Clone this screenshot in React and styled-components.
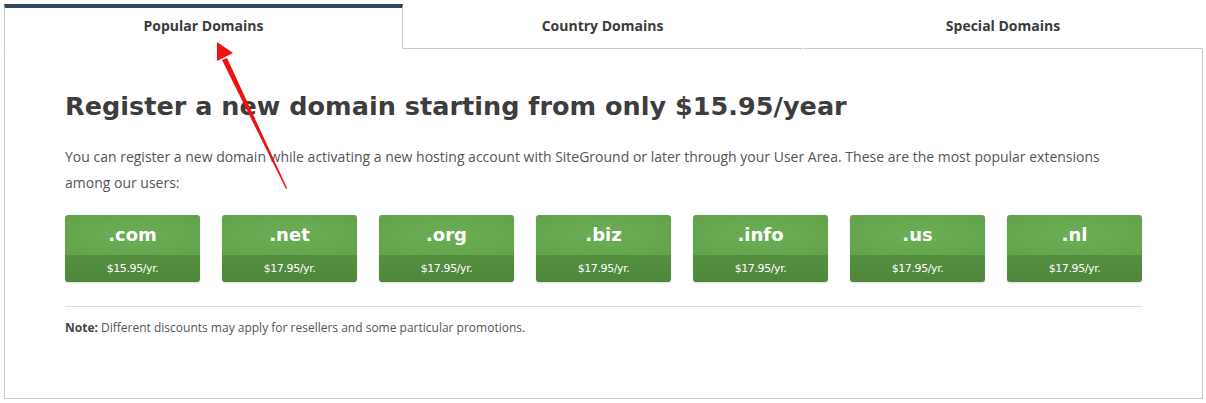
import styled, { createGlobalStyle } from "styled-components";

const GlobalStyle = createGlobalStyle`
  html, body {
    margin: 0;
    padding: 0;
    background: #ffffff;
  }
  body {
    font-family: "Open Sans", "Liberation Sans", sans-serif;
    color: #555555;
  }
`;

const Page = styled.div`
  position: relative;
  width: 1206px;
  height: 403px;
  padding: 4px 3px 0 4px;
  box-sizing: border-box;
`;

const Tabs = styled.div`
  display: grid;
  grid-template-columns: 398px 401px 400px;
  height: 45px;
`;

const Tab = styled.div`
  display: flex;
  align-items: center;
  justify-content: center;
  padding-bottom: 6px;
  font-family: "Open Sans", sans-serif;
  font-weight: 700;
  font-size: 14px;
  color: #3b3b3b;
  box-sizing: border-box;
  border-top: 4px solid ${p => (p.$active ? "#34495e" : "transparent")};
  border-left: 1px solid ${p => (p.$active ? "#c9c9c9" : "transparent")};
  border-right: 1px solid ${p => (p.$active ? "#c9c9c9" : "transparent")};
  border-bottom: 1px solid ${p => (p.$active ? "transparent" : "#c9c9c9")};
  margin-right: ${p => (p.$active ? "-1px" : "0")};
`;

const Panel = styled.div`
  border: 1px solid #c9c9c9;
  border-top: none;
  height: 350px;
  box-sizing: border-box;
  padding: 39px 60px 0 60px;
`;

const Heading = styled.h1`
  margin: 0;
  font-family: "DejaVu Sans", sans-serif;
  font-weight: 700;
  font-size: 25.5px;
  letter-spacing: 0.02px;
  color: #3d3d3d;
  line-height: 36px;
`;

const Intro = styled.p`
  margin: 20px 0 0;
  font-size: 14px;
  line-height: 26px;
  color: #555555;
  width: 1060px;
`;

const CardRow = styled.div`
  display: grid;
  grid-template-columns: repeat(7, 135px);
  gap: 22px;
  margin-top: 19px;
`;

const Card = styled.div`
  display: flex;
  flex-direction: column;
  height: 67px;
  border-radius: 3px;
  overflow: hidden;
  color: #ffffff;
  box-shadow: 0 1px 2px rgba(0, 0, 0, 0.15);
`;

const CardName = styled.div`
  height: 40px;
  display: flex;
  align-items: center;
  justify-content: center;
  background: radial-gradient(ellipse at center, #6cae55 0%, #62a24a 100%);
  font-family: "DejaVu Sans", sans-serif;
  font-weight: 700;
  font-size: 18px;
  padding-bottom: 2px;
  box-sizing: border-box;
`;

const CardPrice = styled.div`
  flex: 1;
  display: flex;
  align-items: center;
  justify-content: center;
  background: linear-gradient(#558f40, #4e873a);
  font-family: "DejaVu Sans", sans-serif;
  font-size: 11px;
  letter-spacing: -0.4px;
`;

const Divider = styled.hr`
  margin: 24px 0 0;
  width: 1077px;
  border: none;
  border-top: 1px solid #dcdcdc;
`;

const Note = styled.p`
  margin: 12px 0 0;
  font-size: 12px;
  color: #555555;

  b {
    color: #444444;
  }
`;

const Arrow = styled.svg`
  position: absolute;
  left: 0;
  top: 0;
  pointer-events: none;
`;

const domains = [
  { name: ".com", price: "$15.95/yr." },
  { name: ".net", price: "$17.95/yr." },
  { name: ".org", price: "$17.95/yr." },
  { name: ".biz", price: "$17.95/yr." },
  { name: ".info", price: "$17.95/yr." },
  { name: ".us", price: "$17.95/yr." },
  { name: ".nl", price: "$17.95/yr." },
];

export default function App() {
  return (
    <>
      <GlobalStyle />
      <Page>
        <Tabs>
          <Tab $active>Popular Domains</Tab>
          <Tab>Country Domains</Tab>
          <Tab>Special Domains</Tab>
        </Tabs>
        <Panel>
          <Heading>Register a new domain starting from only $15.95/year</Heading>
          <Intro>
            You can register a new domain while activating a new hosting account
            with SiteGround or later through your User Area. These are the most
            popular extensions among our users:
          </Intro>
          <CardRow>
            {domains.map(d => (
              <Card key={d.name}>
                <CardName>{d.name}</CardName>
                <CardPrice>{d.price}</CardPrice>
              </Card>
            ))}
          </CardRow>
          <Divider />
          <Note>
            <b>Note:</b> Different discounts may apply for resellers and some
            particular promotions.
          </Note>
        </Panel>
        <Arrow width="1206" height="403" viewBox="0 0 1206 403">
          <polygon points="286,189 222,60 227,58 287,188" fill="#ee1111" />
          <polygon points="217,42 233,53 217,61" fill="#ee1111" />
        </Arrow>
      </Page>
    </>
  );
}
